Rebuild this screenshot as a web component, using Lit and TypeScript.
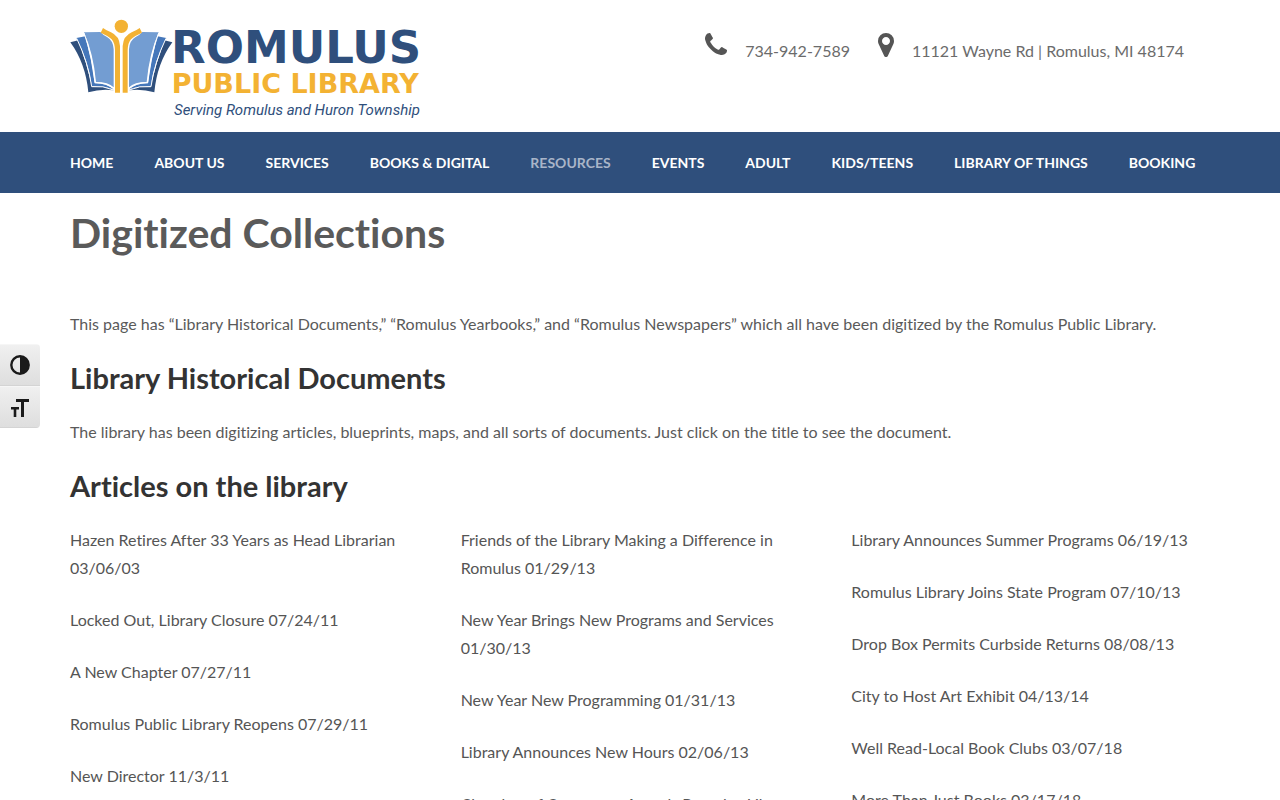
import { LitElement, html, css, svg } from "lit";
import { customElement } from "lit/decorators.js";

const NAV = [
  "Home", "About Us", "Services", "Books & Digital", "Resources",
  "Events", "Adult", "Kids/Teens", "Library of Things", "Booking",
];

const ARTICLES = [
  [
    "Hazen Retires After 33 Years as Head Librarian 03/06/03",
    "Locked Out, Library Closure 07/24/11",
    "A New Chapter 07/27/11",
    "Romulus Public Library Reopens 07/29/11",
    "New Director 11/3/11",
  ],
  [
    "Friends of the Library Making a Difference in Romulus 01/29/13",
    "New Year Brings New Programs and Services 01/30/13",
    "New Year New Programming 01/31/13",
    "Library Announces New Hours 02/06/13",
    "Chamber of Commerce Awards Romulus Library",
  ],
  [
    "Library Announces Summer Programs 06/19/13",
    "Romulus Library Joins State Program 07/10/13",
    "Drop Box Permits Curbside Returns 08/08/13",
    "City to Host Art Exhibit 04/13/14",
    "Well Read-Local Book Clubs 03/07/18",
    "More Than Just Books 03/17/18",
  ],
];

// Left half of the open book; the right half is its mirror image.
const bookHalf = svg`
  <path fill="#2f4f7c" d="M31 97 L55 91 Q80 160 97 231 Q130 226 161 241 Q122 236 85 247 Q77 160 31 97Z"/>
  <path fill="#4577ba" d="M49 84 L76 79 Q95 150 104 220 Q138 219 161 238 Q130 226 96 229 Q84 150 49 84Z"/>
  <path fill="#739dd2" d="M72 67 L121 66 Q130 76 141 81 Q160 92 161 118 L161 232 Q145 216 108 216 Q100 130 72 67Z"/>
  <path fill="none" stroke="#fff" stroke-width="3" d="M50 85 Q85 158 95 230 Q130 226 160 240 M72 69 Q99 145 105 218 Q142 218 161 236"/>
  <path fill="#f3b233" d="M129 54 L122 68 Q145 78 155 88 Q164 98 165 120 L165 248 L180 248 L180 108 Q178 78 153 67 Q140 62 129 54Z"/>
`;

@customElement("app-root")
export class AppRoot extends LitElement {
  static styles = css`
    :host {
      display: block;
      height: 100vh;
      overflow: hidden;
      background: #fff;
      color: #5a5a5a;
      font: 16px/28px Lato, "Open Sans", sans-serif;
      font-variant-ligatures: none;
    }
    a { color: #555; text-decoration: none; }
    .container {
      box-sizing: border-box;
      max-width: 1170px;
      margin: 0 auto;
      padding: 0 15px;
    }
    .header {
      display: flex;
      justify-content: space-between;
      align-items: flex-start;
      padding-top: 20px;
      padding-bottom: 12px;
    }
    .logo, .logo svg, .contact svg, .tools svg { display: block; }
    .logo svg { overflow: visible; }
    .name { font-family: "DejaVu Sans", sans-serif; font-weight: 700; }
    .big { font-size: 135px; fill: #2f4f7c; }
    .small { font-size: 81px; fill: #f3b233; }
    .tag { font: italic 400 45px Roboto, sans-serif; fill: #2f4f7c; }
    .contact {
      display: flex;
      gap: 28px;
      padding: 13px 26px 0 0;
    }
    .contact a { display: flex; gap: 18px; color: #6b6b6b; }
    .contact svg { fill: #555; }
    .contact span { padding-top: 4px; }
    .nav { background: #2f4f7c; }
    .nav ul {
      display: flex;
      gap: 41px;
      margin: 0 auto;
      list-style: none;
      white-space: nowrap;
    }
    .nav a {
      display: block;
      line-height: 61px;
      font-size: 14px;
      font-weight: 700;
      text-transform: uppercase;
      color: #fff;
    }
    .nav a.current { color: #a9b5c8; }
    h1 {
      margin: 0 0 53px;
      padding-top: 16px;
      font-size: 41px;
      line-height: 48px;
    }
    h2 {
      margin: 24px 0;
      font-size: 29px;
      line-height: 32px;
      color: #333;
    }
    p { margin: 0 0 24px; }
    .columns {
      display: grid;
      grid-template-columns: repeat(3, 1fr);
      gap: 32px;
    }
    .tools {
      position: fixed;
      left: 0;
      top: 344px;
      width: 40px;
      border-radius: 0 4px 4px 0;
      overflow: hidden;
    }
    .tools button {
      display: flex;
      align-items: center;
      justify-content: center;
      width: 100%;
      height: 42px;
      padding: 0;
      border: 0;
      border-top: 1px solid #f6f6f6;
      border-bottom: 1px solid #d4d4d4;
      background: linear-gradient(#f0f0f0, #dedede);
    }
  `;

  render() {
    return html`
      <header>
        <div class="container header">
          <a class="logo" href="#" aria-label="Romulus Public Library">
            <svg width="350" height="100" viewBox="30 30 1050 300">
              ${bookHalf}
              <g transform="translate(368 0) scale(-1 1)">${bookHalf}</g>
              <circle cx="184" cy="49" r="20" fill="#f3b233"/>
              <text class="name big" x="333" y="160">ROMULUS</text>
              <text class="name small" x="335" y="248">PUBLIC LIBRARY</text>
              <text class="tag" x="342" y="314">Serving Romulus and Huron Township</text>
            </svg>
          </a>
          <div class="contact">
            <a href="tel:7349427589">
              <svg width="22" height="22" viewBox="192 128 1408 1408" aria-hidden="true"><path d="M1600 1240q0 27-10 70.5t-21 68.5q-21 50-122 106-94 51-186 51-27 0-53-3.5t-57.5-12.5-47-14.5-55.5-20.5-49-18q-98-35-175-83-127-79-264-216t-216-264q-48-77-83-175-3-9-18-49t-20.5-55.5-14.5-47-12.5-57.5-3.5-53q0-92 51-186 56-101 106-122 25-11 68.5-21t70.5-10q14 0 21 3 18 6 53 76 11 19 30 54t35 63.5 31 53.5q3 4 17.5 25t21.5 35.5 7 28.5q0 20-28.5 50t-62 55-62 53-28.5 46q0 9 5 22.5t8.5 20.5 14 24 11.5 19q76 137 174 235t235 174q2 1 19 11.5t24 14 20.5 8.5 22.5 5q18 0 46-28.5t53-62 55-62 50-28.5q14 0 28.5 7t35.5 21.5 25 17.5q25 15 53.5 31t63.5 35 54 30q70 35 76 53 3 7 3 21z"/></svg>
              <span>734-942-7589</span>
            </a>
            <a href="#">
              <svg width="16" height="24" viewBox="384 128 1024 1536" aria-hidden="true"><path d="M1152 640q0-106-75-181t-181-75-181 75-75 181 75 181 181 75 181-75 75-181zm256 0q0 109-33 179l-364 774q-16 33-47.5 52t-67.5 19-67.5-19-46.5-52l-365-774q-33-70-33-179 0-212 150-362t362-150 362 150 150 362z"/></svg>
              <span>11121 Wayne Rd | Romulus, MI 48174</span>
            </a>
          </div>
        </div>
        <nav class="nav">
          <ul class="container">
            ${NAV.map((n) => html`<li><a href="#" class=${n === "Resources" ? "current" : ""}>${n}</a></li>`)}
          </ul>
        </nav>
      </header>
      <main class="container">
        <h1>Digitized Collections</h1>
        <p>This page has “Library Historical Documents,” “Romulus Yearbooks,” and “Romulus Newspapers” which all have been digitized by the Romulus Public Library.</p>
        <h2>Library Historical Documents</h2>
        <p>The library has been digitizing articles, blueprints, maps, and all sorts of documents. Just click on the title to see the document.</p>
        <h2>Articles on the library</h2>
        <div class="columns">
          ${ARTICLES.map((col) => html`<div>${col.map((t) => html`<p><a href="#">${t}</a></p>`)}</div>`)}
        </div>
      </main>
      <div class="tools">
        <button type="button" aria-label="Toggle High Contrast">
          <svg width="20" height="20" viewBox="0 0 20 20"><circle cx="10" cy="10" r="8.7" fill="none" stroke="#1a1a1a" stroke-width="2.4"/><path d="M10 1a9 9 0 0 1 0 18z" fill="#1a1a1a"/></svg>
        </button>
        <button type="button" aria-label="Toggle Font size">
          <svg width="20" height="20" viewBox="-1 -2 20 20" fill="#1a1a1a"><path d="M5 0h13v3h-5v15h-3V3H5zM0 8h8v2.500H5.300V18H2.700v-7.500H0z"/></svg>
        </button>
      </div>
    `;
  }
}
